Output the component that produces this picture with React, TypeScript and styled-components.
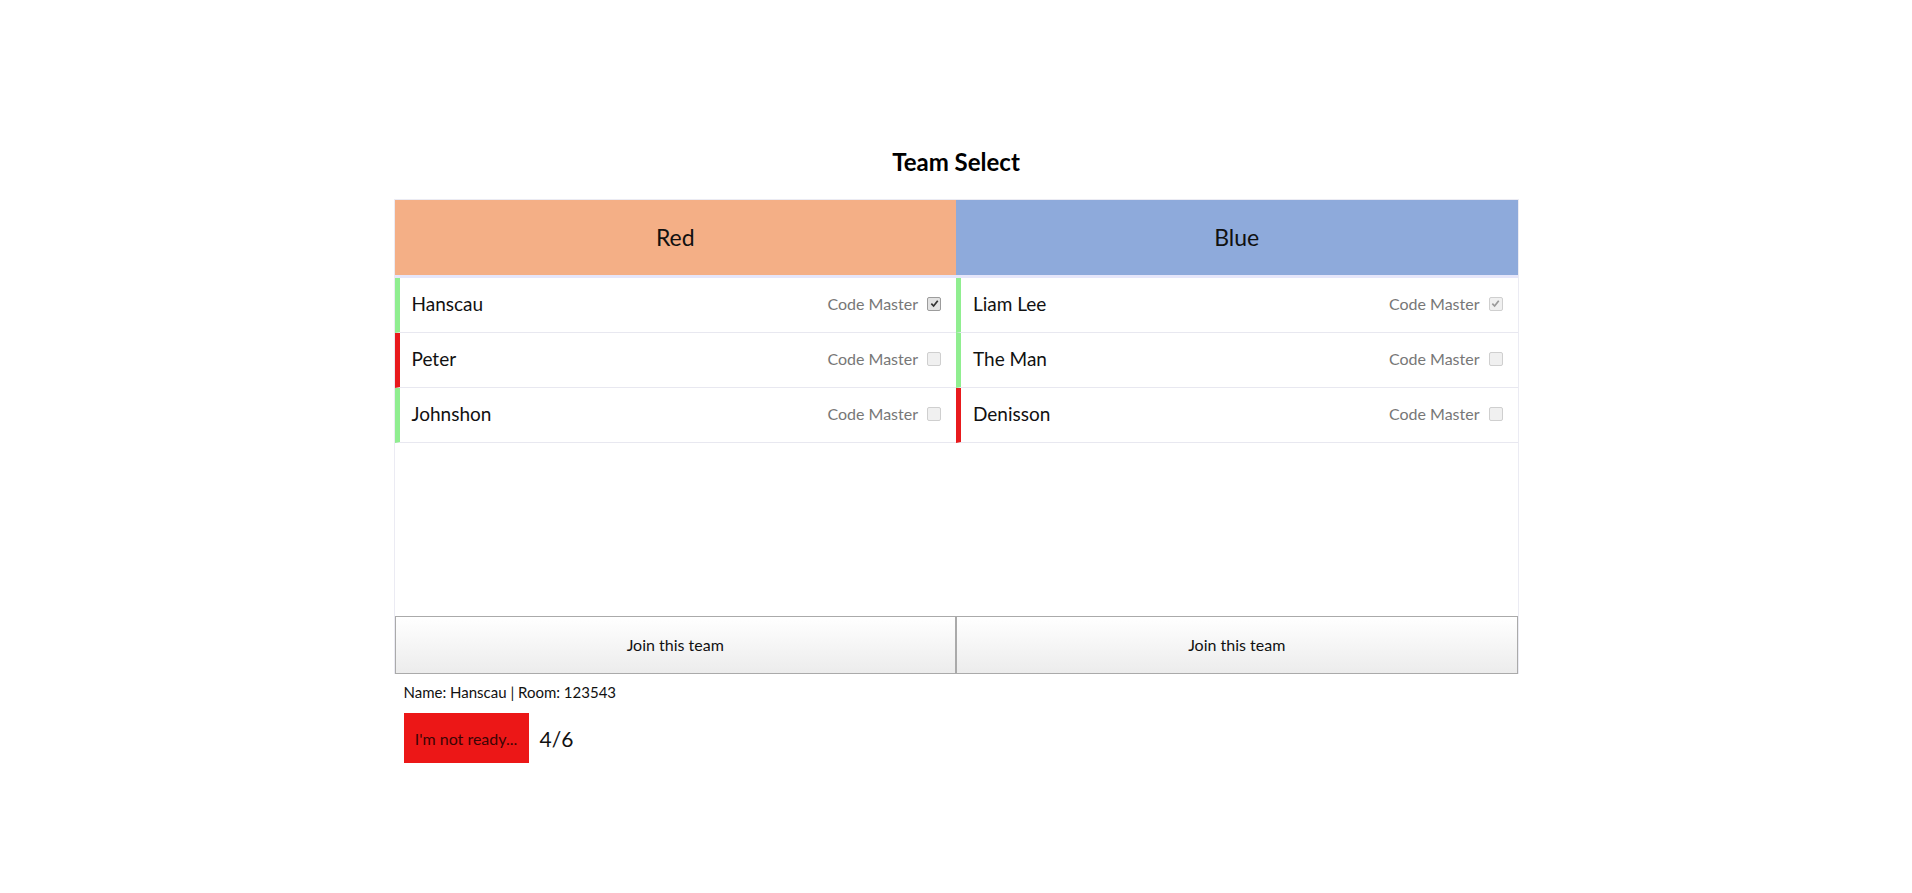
import { createGlobalStyle, styled } from 'styled-components';

type Player = {
  name: string;
  ready: boolean;
  codeMaster: boolean;
  locked?: boolean;
};

type Team = {
  title: string;
  color: string;
  players: Player[];
};

const TEAMS: Team[] = [
  {
    title: 'Red',
    color: '#f4af86',
    players: [
      { name: 'Hanscau', ready: true, codeMaster: true },
      { name: 'Peter', ready: false, codeMaster: false, locked: true },
      { name: 'Johnshon', ready: true, codeMaster: false, locked: true },
    ],
  },
  {
    title: 'Blue',
    color: '#8eaadb',
    players: [
      { name: 'Liam Lee', ready: true, codeMaster: true, locked: true },
      { name: 'The Man', ready: true, codeMaster: false, locked: true },
      { name: 'Denisson', ready: false, codeMaster: false, locked: true },
    ],
  },
];

const GlobalStyle = createGlobalStyle`
  html, body {
    margin: 0;
    padding: 0;
    background: #ffffff;
    font-family: Lato, "Open Sans", sans-serif;
    color: #111;
  }
`;

const CheckBox = ({ checked, locked }: { checked: boolean; locked?: boolean }) => (
  <StyledCheck $locked={locked}>
    {checked && (
      <svg width="9" height="9" viewBox="0 0 10 10">
        <path
          d="M1.5 5.2 L4 7.8 L8.6 2"
          fill="none"
          stroke={locked ? '#9a9a9a' : '#333'}
          strokeWidth="1.9"
        />
      </svg>
    )}
  </StyledCheck>
);

const PlayerRow = ({ player }: { player: Player }) => (
  <StyledRow $ready={player.ready}>
    <StyledName>{player.name}</StyledName>
    <StyledRole>
      Code Master
      <CheckBox checked={player.codeMaster} locked={player.locked} />
    </StyledRole>
  </StyledRow>
);

const TeamColumn = ({ team }: { team: Team }) => (
  <StyledColumn>
    <StyledHeader $color={team.color}>{team.title}</StyledHeader>
    <StyledList>
      {team.players.map((p) => (
        <PlayerRow key={p.name} player={p} />
      ))}
    </StyledList>
    <StyledJoin type="button">Join this team</StyledJoin>
  </StyledColumn>
);

export default function App() {
  return (
    <>
      <GlobalStyle />
      <StyledPage>
        <StyledTitle>Team Select</StyledTitle>
        <StyledBoard>
          {TEAMS.map((t) => (
            <TeamColumn key={t.title} team={t} />
          ))}
        </StyledBoard>
        <StyledInfo>Name: Hanscau | Room: 123543</StyledInfo>
        <StyledReadyRow>
          <StyledReady type="button">I'm not ready...</StyledReady>
          <StyledCount>4/6</StyledCount>
        </StyledReadyRow>
      </StyledPage>
    </>
  );
}

const StyledPage = styled.div`
  width: 1125px;
  margin: 0 auto;
  padding-top: 147px;
`;

const StyledTitle = styled.h2`
  margin: 0 0 22px;
  font-size: 24px;
  line-height: 30px;
  font-weight: 700;
  text-align: center;
  color: #000;
`;

const StyledBoard = styled.div`
  display: grid;
  grid-template-columns: 1fr 1fr;
  border: 1px solid #ebebf3;
  border-bottom: none;
`;

const StyledColumn = styled.div`
  display: flex;
  flex-direction: column;
`;

const StyledHeader = styled.div<{ $color: string }>`
  height: 78px;
  box-sizing: border-box;
  padding-bottom: 2px;
  display: flex;
  align-items: center;
  justify-content: center;
  background: ${({ $color }) => $color};
  border-bottom: 3px solid #e6e6fa;
  font-size: 23px;
  color: #111;
`;

const StyledList = styled.div`
  height: 338px;
  display: flex;
  flex-direction: column;
`;

const StyledRow = styled.div<{ $ready: boolean }>`
  height: 55px;
  box-sizing: border-box;
  display: flex;
  align-items: center;
  justify-content: space-between;
  padding: 0 15px 3px 12px;
  border-left: 5px solid ${({ $ready }) => ($ready ? '#90ee90' : '#e81a1d')};
  border-bottom: 1px solid #e8e8f0;
`;

const StyledName = styled.span`
  font-size: 19px;
  color: #111;
`;

const StyledRole = styled.span`
  display: flex;
  align-items: center;
  gap: 9px;
  font-size: 16px;
  color: #777;
`;

const StyledCheck = styled.span<{ $locked?: boolean }>`
  width: 12px;
  height: 12px;
  display: inline-flex;
  align-items: center;
  justify-content: center;
  border: 1px solid ${({ $locked }) => ($locked ? '#cfcfcf' : '#9c9c9c')};
  border-radius: 2px;
  background: ${({ $locked }) => ($locked ? '#f0f0f0' : '#e2e2e2')};
`;

const StyledJoin = styled.button`
  height: 58px;
  margin: 0;
  padding: 0 0 2px;
  border: 1px solid #aaaaaa;
  background: linear-gradient(#ffffff, #ececec);
  font-family: Lato, "Open Sans", sans-serif;
  font-size: 16px;
  color: #111;
  cursor: pointer;
`;

const StyledInfo = styled.div`
  margin: 7px 0 0 10px;
  font-size: 15px;
  line-height: 22px;
  color: #111;
`;

const StyledReadyRow = styled.div`
  display: flex;
  align-items: center;
  gap: 11px;
  margin: 10px 0 0 10px;
`;

const StyledReady = styled.button`
  width: 125px;
  height: 50px;
  border: none;
  background: #ec1717;
  font-family: Lato, "Open Sans", sans-serif;
  font-size: 16px;
  color: #3a0505;
  padding: 0;
`;

const StyledCount = styled.span`
  font-size: 21px;
  color: #111;
`;
